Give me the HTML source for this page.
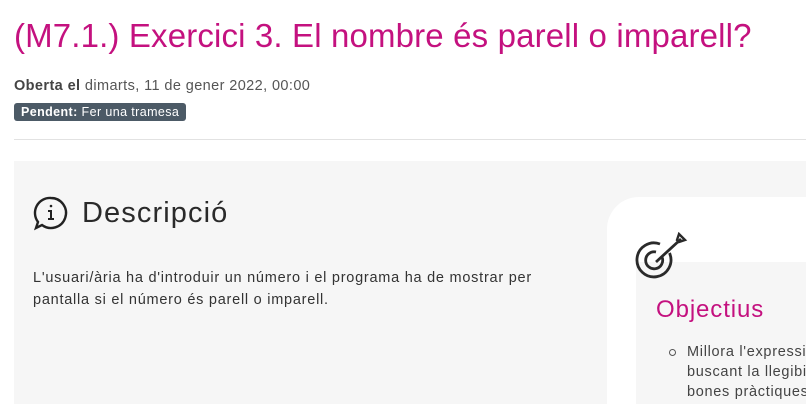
<!DOCTYPE html>
<html><head><style>
body{margin:0;width:806px;height:404px;overflow:hidden;background:#fff;font-family:"Liberation Sans",sans-serif;color:#333;position:relative}
.a{position:absolute;white-space:nowrap}
h1{position:absolute;left:14px;top:17px;margin:0;font-size:33px;font-weight:normal;color:#c4117f;letter-spacing:0.15px}
</style></head><body>
<h1>(M7.1.) Exercici 3. El nombre és parell o imparell?</h1>
<div class="a" style="left:14px;top:78px;font-size:14.5px;color:#555;letter-spacing:0.4px"><b style="color:#444">Oberta el</b> dimarts, 11 de gener 2022, 00:00</div>
<div class="a" style="left:14px;top:103px;height:18px;line-height:18px;padding:0 7px;background:#4c5a66;color:#fff;font-size:12.5px;border-radius:3px;letter-spacing:0.4px"><b>Pendent:</b> Fer una tramesa</div>
<div class="a" style="left:14px;top:139px;width:792px;height:1px;background:#e2e2e2"></div>
<div class="a" style="left:14px;top:161px;width:792px;height:243px;background:#f6f6f6"></div>
<svg class="a" style="left:33px;top:195px" width="36" height="36" viewBox="0 0 36 36" fill="none" stroke="#222" stroke-width="2.4"><path d="M18 3a15 15 0 1 1-9 27l-6 3 2-6A15 15 0 0 1 18 3z"/><circle cx="18" cy="11" r="1.3" fill="#222" stroke="none"/><path d="M15 16h3v8M15 24h6" stroke-width="2"/></svg>
<div class="a" style="left:82px;top:197px;font-size:29px;color:#2a2a2a;letter-spacing:1.1px">Descripció</div>
<div class="a" style="left:33px;top:267px;font-size:14.5px;line-height:22px;color:#333;letter-spacing:0.75px">L'usuari/ària ha d'introduir un número i el programa ha de mostrar per<br>pantalla si el número és parell o imparell.</div>
<div class="a" style="left:607px;top:197px;width:199px;height:207px;background:#fff;border-top-left-radius:32px"></div>
<div class="a" style="left:636px;top:262px;width:170px;height:142px;background:#f6f6f6"></div>
<svg class="a" style="left:634px;top:232px" width="54" height="52" viewBox="0 0 54 52" fill="none" stroke="#2a2a2a" stroke-width="2.8"><path d="M35.5 21A17 17 0 1 1 26 12"/><path d="M28 25A8.5 8.5 0 1 1 22 20"/><path d="M22 30L47 7"/><path d="M43 8l2-6 6 6-6 2z" stroke-width="2.4"/></svg>
<div class="a" style="left:656px;top:296px;font-size:24px;color:#c4117f;letter-spacing:0.9px">Objectius</div>
<div class="a" style="left:669px;top:349px;width:5px;height:5px;border:1.3px solid #555;border-radius:50%"></div>
<div class="a" style="left:687px;top:342px;font-size:14.5px;line-height:20px;color:#444;letter-spacing:0.7px">Millora l'expressivitat<br>buscant la llegibilitat<br>bones pràctiques</div>
</body></html>
